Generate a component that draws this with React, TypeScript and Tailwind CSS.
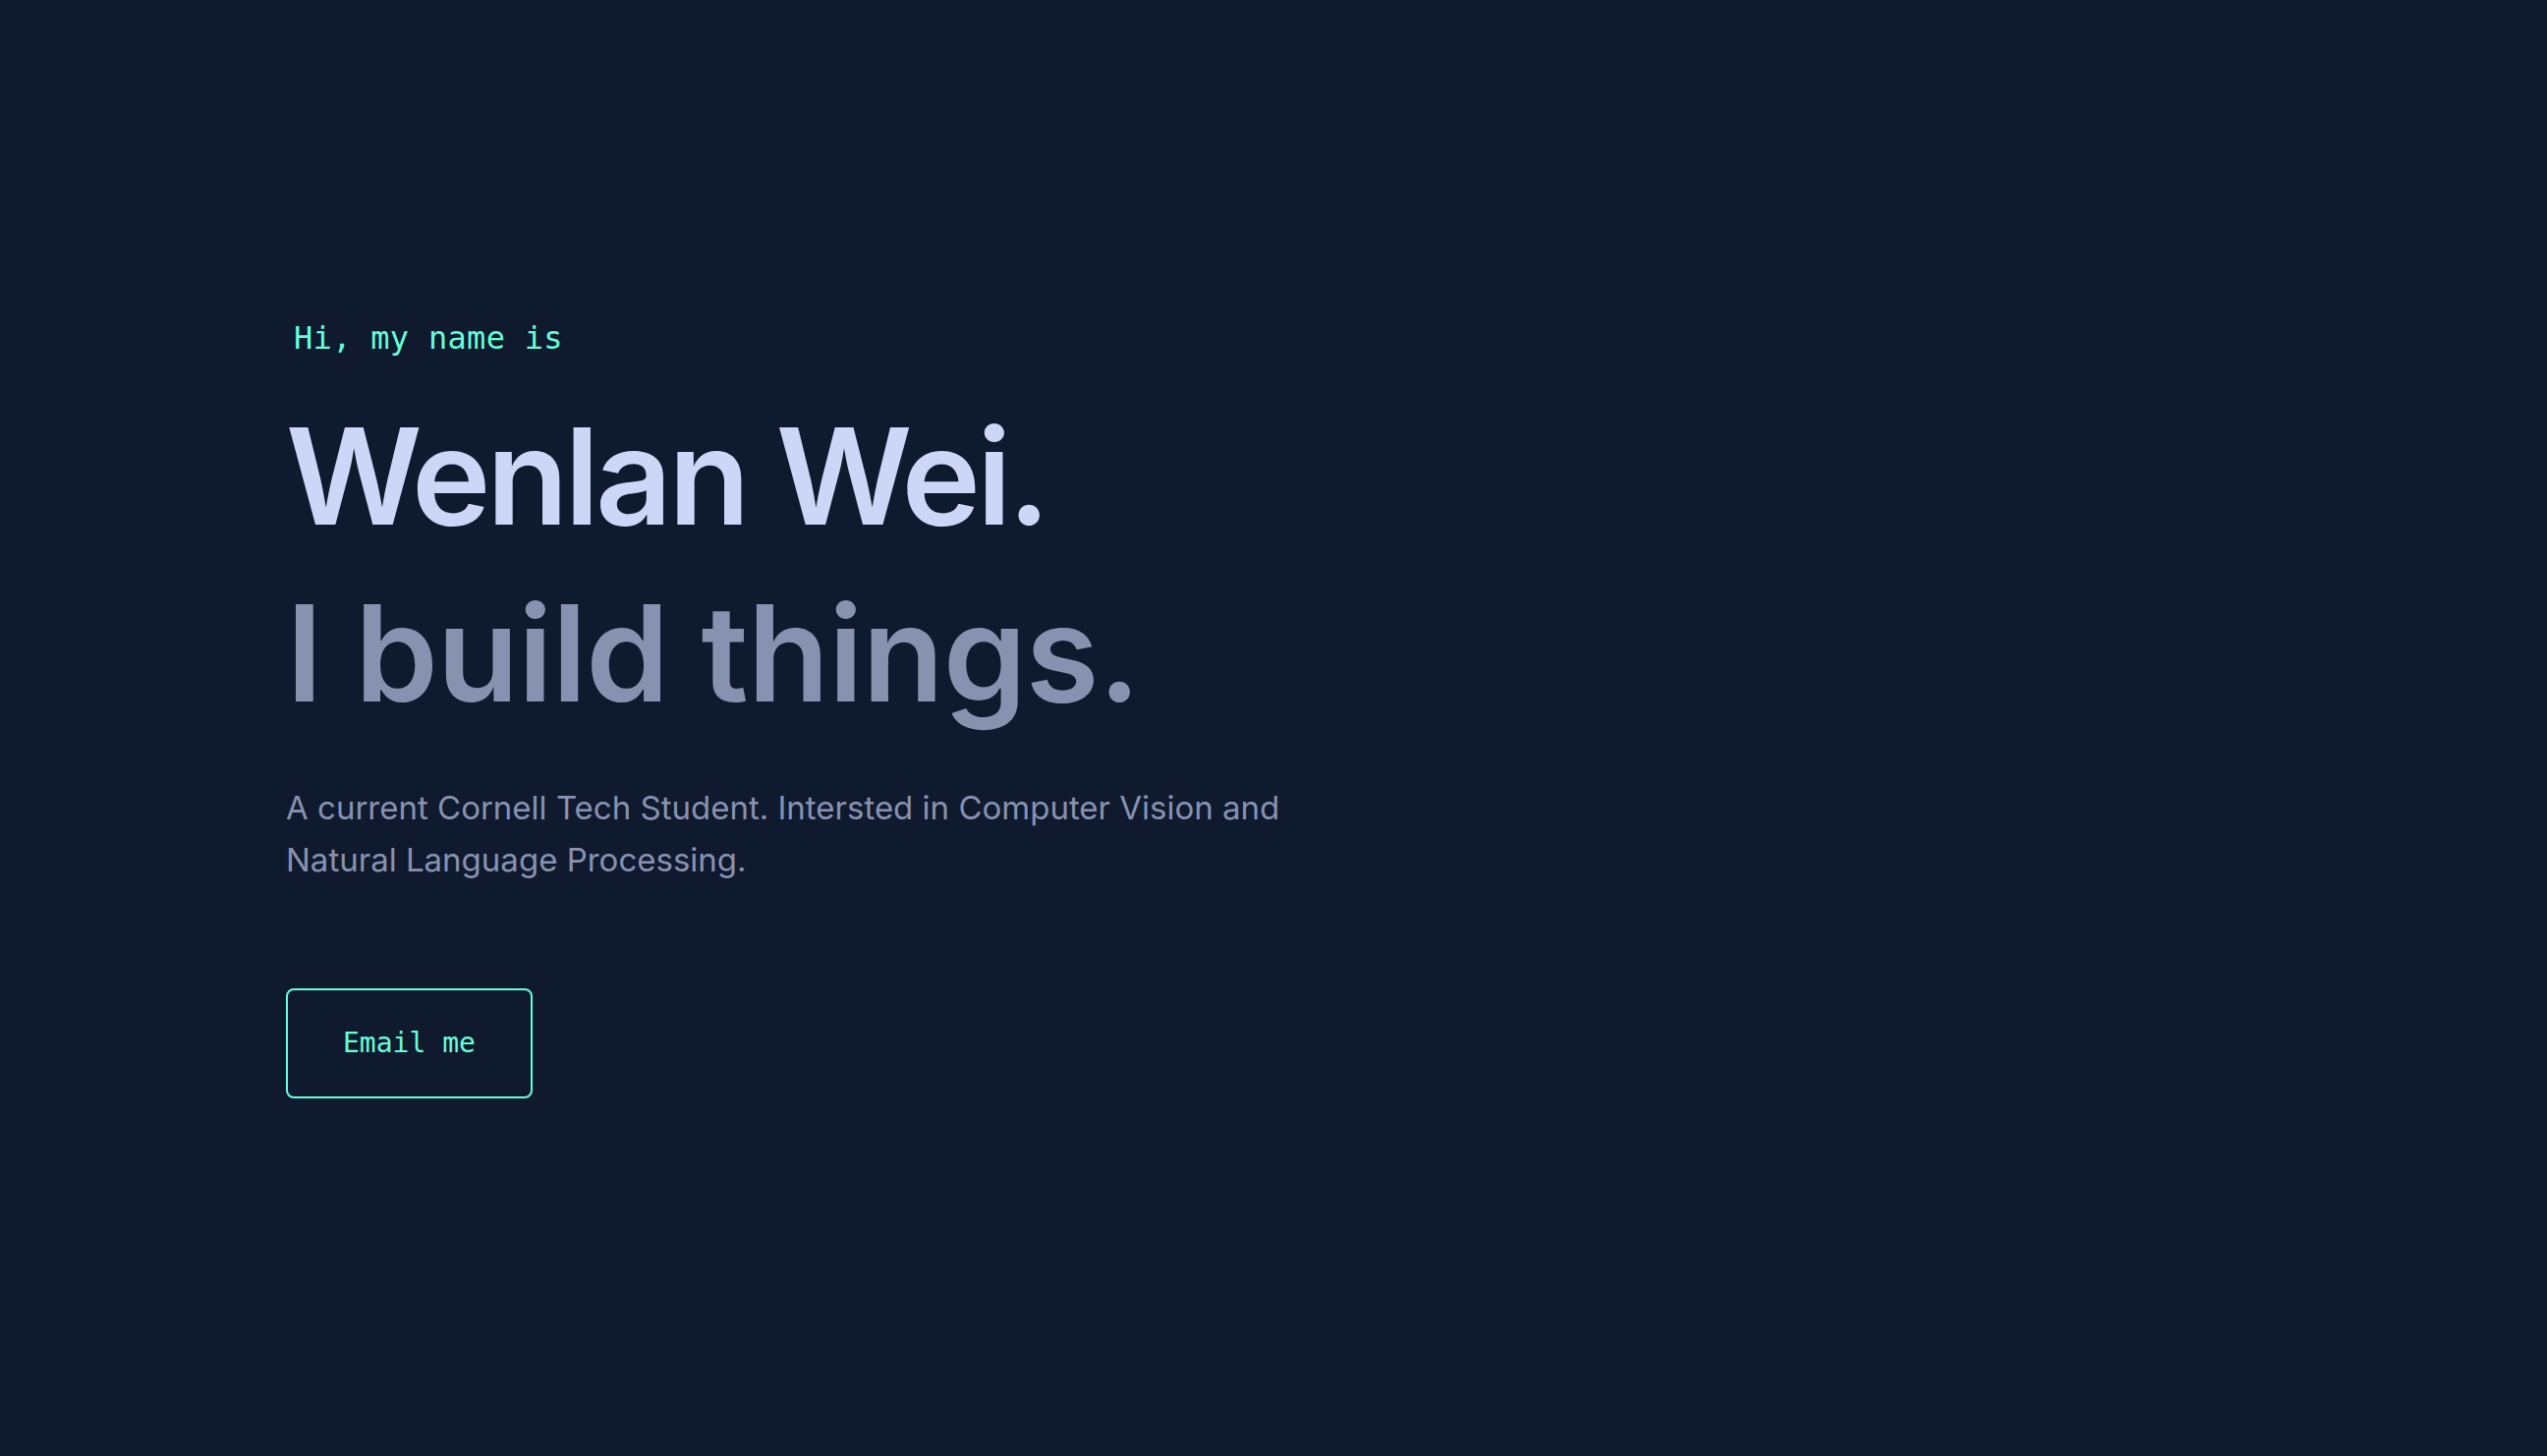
import React from 'react';

const Hero = () => {
  return (
    <section className="flex min-h-screen flex-col items-start pl-[291px] pt-[324px]">
      <p className="ml-[8px] font-['DejaVu_Sans_Mono','Liberation_Mono',monospace] text-[32px] leading-[40px] tracking-[0.3px] text-[#64ffda]">
        Hi, my name is
      </p>
      <h2 className="mt-[31px] font-['Inter','Liberation_Sans',sans-serif] text-[136px] font-semibold leading-[180px] tracking-[-4px] text-[#ccd6f6]">
        Wenlan Wei.
      </h2>
      <h3 className="font-['Inter','Liberation_Sans',sans-serif] text-[136px] font-semibold leading-[180px] tracking-[-1px] text-[#8892b0]">
        I build things.
      </h3>
      <p className="mt-[41px] max-w-[1080px] font-['Inter','Liberation_Sans',sans-serif] text-[33px] leading-[53px] text-[#8892b0]">
        A current Cornell Tech Student. Intersted in Computer Vision and Natural Language Processing.
      </p>
      <a
        href="mailto:"
        className="mt-[104px] rounded-[8px] border-2 border-[#64ffda] px-[56px] py-[40px] font-['DejaVu_Sans_Mono','Liberation_Mono',monospace] text-[28px] leading-[28px] text-[#64ffda] no-underline"
      >
        Email me
      </a>
    </section>
  );
};

export default function App() {
  return (
    <div className="min-h-screen w-full bg-[#0f1a2e]">
      <Hero />
    </div>
  );
}
